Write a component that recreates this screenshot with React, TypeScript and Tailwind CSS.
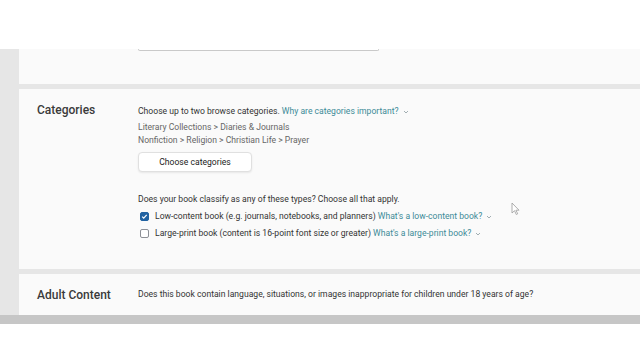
import { useState } from 'react'

const font = { fontFamily: 'Roboto, "Noto Sans", sans-serif' }

function Chevron() {
  return (
    <svg width="6" height="4" viewBox="0 0 6 4" className="ml-[4px] inline-block">
      <path d="M1 1l2 2 2-2" fill="none" stroke="#8a9aa0" strokeWidth="0.8" />
    </svg>
  )
}

function Checkbox({ checked, onChange }: { checked: boolean; onChange: () => void }) {
  return (
    <button
      onClick={onChange}
      className={
        checked
          ? 'w-[9px] h-[9px] rounded-[2px] bg-[#2162a1] border border-[#2162a1] flex items-center justify-center'
          : 'w-[9px] h-[9px] rounded-[2px] bg-white border border-[#8d9096] flex items-center justify-center'
      }
    >
      {checked && (
        <svg width="7" height="7" viewBox="0 0 7 7">
          <path d="M1.2 3.6l1.5 1.5 3-3.2" fill="none" stroke="#fff" strokeWidth="1.2" />
        </svg>
      )}
    </button>
  )
}

export default function App() {
  const [lowContent, setLowContent] = useState(true)
  const [largePrint, setLargePrint] = useState(false)

  return (
    <div className="w-[640px] h-[360px] bg-white flex flex-col relative overflow-hidden" style={font}>
      <div className="h-[49px] bg-white" />
      <div className="bg-[#e6e6e6] pl-[19px] flex flex-col gap-[5px]">
        <div className="h-[35px] bg-[#fafafa] pl-[119px]">
          <div className="w-[241px] h-[2px] bg-white border-x border-b border-[#c9c9c9] rounded-b-[3px]" />
        </div>

        <div className="h-[180px] bg-[#fafafa] flex pt-[15px]">
          <div className="w-[119px] pl-[18px] text-[12px] font-medium text-[#3a3a3a] leading-[13px]">Categories</div>
          <div className="flex flex-col text-[8.6px] text-[#333] leading-[13px]">
            <div className="pt-[1px]">
              Choose up to two browse categories.{' '}
              <span className="text-[#3d8b98]">Why are categories important?</span>
              <Chevron />
            </div>
            <div className="text-[#666] mt-[3px]">Literary Collections &gt; Diaries &amp; Journals</div>
            <div className="text-[#666]">Nonfiction &gt; Religion &gt; Christian Life &gt; Prayer</div>
            <button className="mt-[5px] w-[114px] h-[20px] rounded-[4px] border border-[#e0e0e0] bg-white shadow-[0_1px_2px_rgba(0,0,0,0.08)] text-[8.6px] text-[#222]">
              Choose categories
            </button>
            <div className="mt-[21px]">Does your book classify as any of these types? Choose all that apply.</div>
            <div className="flex items-center gap-[6px] mt-[4px] pl-[2px]">
              <Checkbox checked={lowContent} onChange={() => setLowContent(!lowContent)} />
              <span>
                Low-content book (e.g. journals, notebooks, and planners){' '}
                <span className="text-[#3d8b98]">What's a low-content book?</span>
                <Chevron />
              </span>
            </div>
            <div className="flex items-center gap-[6px] mt-[4px] pl-[2px]">
              <Checkbox checked={largePrint} onChange={() => setLargePrint(!largePrint)} />
              <span>
                Large-print book (content is 16-point font size or greater){' '}
                <span className="text-[#3d8b98]">What's a large-print book?</span>
                <Chevron />
              </span>
            </div>
          </div>
        </div>

        <div className="h-[41px] bg-[#fafafa] flex items-center">
          <div className="w-[119px] pl-[18px] text-[12px] font-medium text-[#3a3a3a]">Adult Content</div>
          <div className="text-[8.6px] text-[#333]">
            Does this book contain language, situations, or images inappropriate for children under 18 years of age?
          </div>
        </div>
      </div>
      <div className="h-[9px] bg-[#c6c6c6]" />
      <div className="flex-1 bg-white" />

      <svg width="9" height="13" viewBox="0 0 9 13" className="absolute left-[511px] top-[202px]">
        <path d="M1 1v10l2.5-2.3 1.8 3.8 1.4-.7-1.8-3.6H8z" fill="#fff" stroke="#9a9a9a" strokeWidth="0.8" />
      </svg>
    </div>
  )
}
